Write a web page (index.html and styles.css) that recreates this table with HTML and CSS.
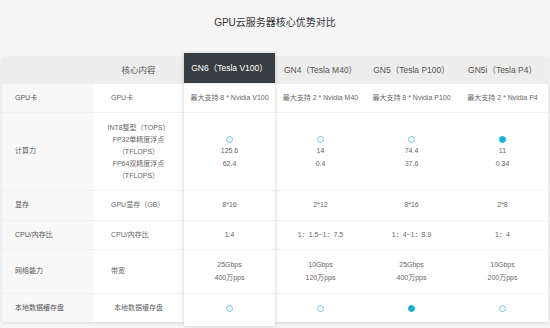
FILE: index.html
```html
<!DOCTYPE html>
<html lang="zh">
<head>
<meta charset="utf-8">
<link rel="stylesheet" href="styles.css">
</head>
<body>
<div class="page">
  <h1 class="title">GPU云服务器核心优势对比</h1>
  <div class="table">
    <div class="col col-label">
      <div class="cell head"></div>
      <div class="cell r-gpu">GPU卡</div>
      <div class="cell r-compute">计算力</div>
      <div class="cell r-mem">显存</div>
      <div class="cell r-cpu">CPU/内存比</div>
      <div class="cell r-net">网络能力</div>
      <div class="cell r-disk">本地数据缓存盘</div>
    </div>
    <div class="col col-item">
      <div class="cell head">核心内容</div>
      <div class="cell r-gpu">GPU卡</div>
      <div class="cell r-compute center">
        <span>INT8整型（TOPS）</span>
        <span>FP32单精度浮点</span>
        <span>（TFLOPS）</span>
        <span>FP64双精度浮点</span>
        <span>（TFLOPS）</span>
      </div>
      <div class="cell r-mem">GPU显存（GB）</div>
      <div class="cell r-cpu">CPU/内存比</div>
      <div class="cell r-net">带宽</div>
      <div class="cell r-disk center">本地数据缓存盘</div>
    </div>
    <div class="col col-val col-active">
      <div class="cell head">GN6（Tesla V100）</div>
      <div class="cell r-gpu">最大支持 8 * Nvidia V100</div>
      <div class="cell r-compute"><i class="dot"></i><span>125.6</span><span>62.4</span></div>
      <div class="cell r-mem">8*16</div>
      <div class="cell r-cpu">1:4</div>
      <div class="cell r-net"><span>25Gbps</span><span>400万pps</span></div>
      <div class="cell r-disk"><i class="dot"></i></div>
    </div>
    <div class="col col-val">
      <div class="cell head">GN4（Tesla M40）</div>
      <div class="cell r-gpu">最大支持 2 * Nvidia M40</div>
      <div class="cell r-compute"><i class="dot"></i><span>14</span><span>0.4</span></div>
      <div class="cell r-mem">2*12</div>
      <div class="cell r-cpu">1：1.5~1：7.5</div>
      <div class="cell r-net"><span>10Gbps</span><span>120万pps</span></div>
      <div class="cell r-disk"><i class="dot"></i></div>
    </div>
    <div class="col col-val">
      <div class="cell head">GN5（Tesla P100）</div>
      <div class="cell r-gpu">最大支持 8 * Nvidia P100</div>
      <div class="cell r-compute"><i class="dot"></i><span>74.4</span><span>37.6</span></div>
      <div class="cell r-mem">8*16</div>
      <div class="cell r-cpu">1：4~1：8.9</div>
      <div class="cell r-net"><span>25Gbps</span><span>400万pps</span></div>
      <div class="cell r-disk"><i class="dot filled"></i></div>
    </div>
    <div class="col col-val">
      <div class="cell head">GN5i（Tesla P4）</div>
      <div class="cell r-gpu">最大支持 2 * Nvidia P4</div>
      <div class="cell r-compute"><i class="dot filled"></i><span>11</span><span>0.34</span></div>
      <div class="cell r-mem">2*8</div>
      <div class="cell r-cpu">1：4</div>
      <div class="cell r-net"><span>10Gbps</span><span>200万pps</span></div>
      <div class="cell r-disk"><i class="dot"></i></div>
    </div>
  </div>
</div>
</body>
</html>
```

FILE: styles.css
```css
* { box-sizing: border-box; }
html, body { margin: 0; padding: 0; }
body {
  background: #f5f5f5;
  font-family: "Liberation Sans", Arial, "Noto Sans CJK SC", sans-serif;
  color: #666;
  width: 550px;
  height: 328px;
  overflow: hidden;
}
.page { padding: 0 2px; }
.title {
  margin: 16px 0 0;
  font-size: 10px;
  line-height: 13px;
  font-weight: normal;
  color: #333;
  text-align: center;
}
.table {
  display: flex;
  margin-top: 28px;
  background: #fff;
  box-shadow: 0 1px 3px rgba(0,0,0,0.12);
}
.col {
  width: 91px;
  display: flex;
  flex-direction: column;
}
.cell {
  display: flex;
  flex-direction: column;
  justify-content: center;
  font-size: 7px;
  line-height: 12.5px;
  border-top: 1px solid #f1f1f1;
}
.cell.head {
  height: 26px;
  border-top: none;
  background: #ecedec;
  font-size: 8.5px;
  color: #555;
  align-items: center;
}
.r-gpu { height: 29px; }
.r-compute { height: 78px; }
.r-mem { height: 30px; }
.r-cpu { height: 29px; }
.r-net { height: 44px; }
.r-disk { height: 29px; }

.col-label .cell { padding-left: 13px; background: #f8f8f8; color: #555; }
.col-label .cell.head { background: #ecedec; }
.col-item .cell { padding-left: 18px; }
.col-item .cell.head { padding-left: 0; }
.col-item .cell.center { padding-left: 0; align-items: center; line-height: 12px; }

.col-val .cell { align-items: center; }
.col-active {
  position: relative;
  z-index: 1;
  margin: -4px 0 -4px;
  padding-bottom: 4px;
  background: #fff;
  box-shadow: 0 0 4px rgba(0,0,0,0.18);
}
.col-active .cell.head {
  height: 30px;
  background: #373d41;
  color: #fff;
}
.dot {
  display: block;
  width: 7px;
  height: 7px;
  margin: 3px 0 2px;
  border-radius: 50%;
  border: 1px solid #6ccbdb;
  background: #fff;
}
.dot.filled { background: #13b5d8; border-color: #13b5d8; }
```
